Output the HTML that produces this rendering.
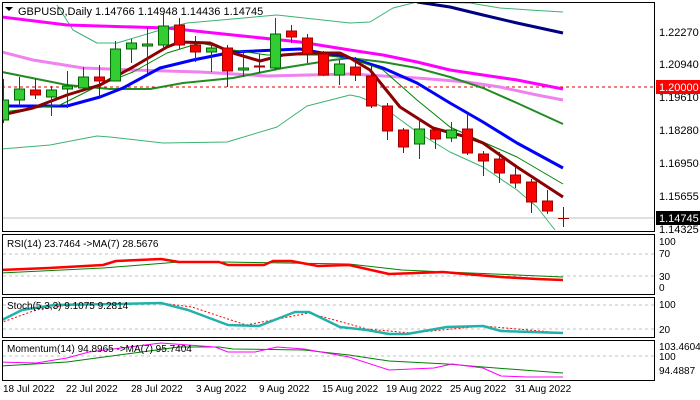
<!DOCTYPE html>
<html><head><meta charset="utf-8"><style>
html,body{margin:0;padding:0;background:#fff;width:700px;height:400px;overflow:hidden}
svg{display:block;font-family:"Liberation Sans",sans-serif}
</style></head><body>
<svg width="700" height="400" viewBox="0 0 700 400" xmlns="http://www.w3.org/2000/svg">
<rect width="700" height="400" fill="#fff"/>
<defs><clipPath id="m"><rect x="3" y="3" width="652" height="228"/></clipPath>
<clipPath id="s"><rect x="3" y="234" width="652" height="148"/></clipPath></defs>
<g clip-path="url(#m)" fill="none" stroke-linejoin="round">
<line x1="2" y1="218" x2="655" y2="218" stroke="#c0c0c0"/>
<line x1="2" y1="87" x2="655" y2="87" stroke="#e00000" stroke-dasharray="3,3"/>
<polyline stroke="#3cb371" points="57,5 73,30 97,43 117,43 167,28 187,23 277,15 350,23 370,22 393,8 417,2 470,3 500,8 530,10 563,12"/>
<polyline stroke="#3cb371" points="2,149 50,145 97,136 110,137 163,143 227,142 277,127 307,106 350,95 360,97 383,107 417,132 450,152 483,167 517,190 537,207 555,230"/>
<polyline stroke="#ff00ff" stroke-width="3" points="2,17 67,25 167,28 233,35 300,42 350,50 383,55 417,62 450,70 483,75 517,80 563,89"/>
<polyline stroke="#ee82ee" stroke-width="3" points="2,52 33,60 83,68 133,70 200,72 267,76 350,74 417,78 467,82 500,87 537,95 563,100"/>
<polyline stroke="#000080" stroke-width="3" points="417,2 450,7 483,15 517,23 563,33"/>
<polyline stroke="#228b22" stroke-width="2" points="2,72 67,85 110,89 150,89 183,83 233,78 283,68 333,60 350,58 383,62 417,68 450,77 483,88 517,103 563,124"/>
<polyline stroke="#0000ff" stroke-width="3" points="7,106 67,106 100,97 123,88 160,68 193,60 233,52 300,49 333,55 350,58 383,68 417,83 450,103 483,122 517,143 563,168"/>
<polyline stroke="#008000" points="2,112 60,105 100,85 133,72 167,53 200,43 233,50 267,55 317,55 350,58 383,70 417,100 450,127 483,142 517,157 563,184"/>
<polyline stroke="#8b0000" stroke-width="3" points="2,115 33,108 67,95 100,85 133,67 167,47 180,42 210,43 233,53 260,61 283,55 310,53 340,53 350,58 370,70 400,107 433,128 467,137 483,143 517,167 563,197"/>
<g shape-rendering="crispEdges" stroke-width="1">
<g stroke="#006400" fill="#32cd32">
<line x1="3.5" y1="79" x2="3.5" y2="123"/><rect x="-1.5" y="100" width="10" height="20"/>
<line x1="19.5" y1="77" x2="19.5" y2="106"/><rect x="14.5" y="89" width="10" height="11"/>
<line x1="51.5" y1="86" x2="51.5" y2="116"/><rect x="46.5" y="90" width="10" height="7"/>
<line x1="67.5" y1="71" x2="67.5" y2="108"/><rect x="62.5" y="86" width="10" height="3"/>
<line x1="83.5" y1="67" x2="83.5" y2="89"/><rect x="78.5" y="77" width="10" height="11"/>
<line x1="115.5" y1="41" x2="115.5" y2="81"/><rect x="110.5" y="49" width="10" height="32"/>
<line x1="131.5" y1="39" x2="131.5" y2="63"/><rect x="126.5" y="43" width="10" height="6"/>
<line x1="147.5" y1="27" x2="147.5" y2="73"/><rect x="142.5" y="44" width="10" height="2"/>
<line x1="163.5" y1="13" x2="163.5" y2="49"/><rect x="158.5" y="26" width="10" height="19"/>
<line x1="211.5" y1="43" x2="211.5" y2="72"/><rect x="206.5" y="48" width="10" height="4"/>
<line x1="243.5" y1="53" x2="243.5" y2="77"/><rect x="238.5" y="68" width="10" height="2"/>
<line x1="275.5" y1="18" x2="275.5" y2="70"/><rect x="270.5" y="34" width="10" height="34"/>
<line x1="339.5" y1="60" x2="339.5" y2="85"/><rect x="334.5" y="64" width="10" height="11"/>
<line x1="419.5" y1="118" x2="419.5" y2="159"/><rect x="414.5" y="129" width="10" height="15"/>
<line x1="451.5" y1="122" x2="451.5" y2="142"/><rect x="446.5" y="130" width="10" height="8"/>
</g>
<g stroke="#a00000" fill="#ff0000">
<line x1="35.5" y1="79" x2="35.5" y2="99"/><rect x="30.5" y="90" width="10" height="5"/>
<line x1="99.5" y1="65" x2="99.5" y2="97"/><rect x="94.5" y="77" width="10" height="4"/>
<line x1="179.5" y1="18" x2="179.5" y2="49"/><rect x="174.5" y="25" width="10" height="20"/>
<line x1="195.5" y1="36" x2="195.5" y2="62"/><rect x="190.5" y="45" width="10" height="7"/>
<line x1="227.5" y1="45" x2="227.5" y2="87"/><rect x="222.5" y="48" width="10" height="23"/>
<line x1="259.5" y1="54" x2="259.5" y2="73"/><rect x="254.5" y="66" width="10" height="1"/>
<line x1="291.5" y1="25" x2="291.5" y2="43"/><rect x="286.5" y="31" width="10" height="6"/>
<line x1="307.5" y1="34" x2="307.5" y2="63"/><rect x="302.5" y="38" width="10" height="16"/>
<line x1="323.5" y1="51" x2="323.5" y2="76"/><rect x="318.5" y="54" width="10" height="21"/>
<line x1="355.5" y1="57" x2="355.5" y2="81"/><rect x="350.5" y="67" width="10" height="8"/>
<line x1="371.5" y1="65" x2="371.5" y2="108"/><rect x="366.5" y="76" width="10" height="30"/>
<line x1="387.5" y1="103" x2="387.5" y2="140"/><rect x="382.5" y="106" width="10" height="25"/>
<line x1="403.5" y1="128" x2="403.5" y2="153"/><rect x="398.5" y="130" width="10" height="17"/>
<line x1="435.5" y1="128" x2="435.5" y2="149"/><rect x="430.5" y="130" width="10" height="9"/>
<line x1="467.5" y1="113" x2="467.5" y2="155"/><rect x="462.5" y="129" width="10" height="24"/>
<line x1="483.5" y1="151" x2="483.5" y2="176"/><rect x="478.5" y="154" width="10" height="7"/>
<line x1="499.5" y1="152" x2="499.5" y2="183"/><rect x="494.5" y="159" width="10" height="14"/>
<line x1="515.5" y1="164" x2="515.5" y2="188"/><rect x="510.5" y="175" width="10" height="8"/>
<line x1="531.5" y1="179" x2="531.5" y2="213"/><rect x="526.5" y="182" width="10" height="20"/>
<line x1="547.5" y1="190" x2="547.5" y2="214"/><rect x="542.5" y="201" width="10" height="10"/>
<line x1="563.5" y1="207" x2="563.5" y2="227"/><line x1="558" y1="218.5" x2="569" y2="218.5"/>
</g></g>
</g>
<g clip-path="url(#s)" fill="none" stroke-linejoin="round">
<line x1="3" y1="254" x2="655" y2="254" stroke="#c0c0c0" stroke-dasharray="3,3"/>
<line x1="3" y1="276" x2="655" y2="276" stroke="#c0c0c0" stroke-dasharray="3,3"/>
<polyline stroke="#008000" points="0,273 103,268 179,262 224,262 349,264 402,270 447,272 563,277"/>
<polyline stroke="#ff0000" stroke-width="2.5" points="0,270 49,268 103,265 116,261 161,259 179,262 219,262 228,265 264,265 273,261 291,261 318,266 349,265 389,274 416,273 443,272 465,274 501,277 537,279 563,280"/>
<line x1="3" y1="305" x2="655" y2="305" stroke="#c0c0c0" stroke-dasharray="3,3"/>
<line x1="3" y1="329" x2="655" y2="329" stroke="#c0c0c0" stroke-dasharray="3,3"/>
<polyline stroke="#ff0000" stroke-dasharray="2,2" points="0,323 36,310 67,305 161,303 192,307 246,325 309,313 367,329 411,333 483,326 563,333"/>
<polyline stroke="#20b2aa" stroke-width="2.5" points="0,321 22,310 54,305 116,304 161,303 188,310 228,325 259,326 295,312 309,312 340,327 367,330 389,334 407,334 447,327 483,326 501,331 563,333"/>
<line x1="3" y1="356" x2="655" y2="356" stroke="#c0c0c0" stroke-dasharray="3,3"/>
<polyline stroke="#008000" points="0,366 67,362 134,353 179,347 219,347 233,349 304,350 349,355 389,361 447,364 483,367 563,373"/>
<polyline stroke="#ff00ff" points="0,362 36,363 67,358 89,352 161,343 188,345 215,347 228,352 255,352 277,347 304,349 349,357 389,370 434,368 452,364 483,368 501,376 528,377 563,377"/>
</g>
<g fill="none" stroke="#000" shape-rendering="crispEdges">
<rect x="2.5" y="2.5" width="652" height="229"/>
<rect x="2.5" y="234.5" width="652" height="60"/>
<rect x="2.5" y="297.5" width="652" height="40"/>
<rect x="2.5" y="340.5" width="652" height="40"/>
</g>
<g font-size="11" fill="#000">
<polygon points="5,7 13,7 9,11" fill="#000"/>
<text x="18" y="15">GBPUSD,Daily  1.14766 1.14948 1.14436 1.14745</text>
<text x="659" y="36">1.22270</text>
<text x="659" y="68">1.20940</text>
<text x="659" y="101">1.19610</text>
<text x="659" y="134">1.18280</text>
<text x="659" y="167">1.16950</text>
<text x="659" y="200">1.15655</text>
<text x="659" y="233">1.14325</text>
<rect x="656" y="80" width="44" height="14" fill="#ff0000"/>
<text x="659" y="91" fill="#fff">1.20000</text>
<rect x="656" y="211" width="44" height="14" fill="#000"/>
<text x="659" y="222" fill="#fff">1.14745</text>
<text x="7" y="247" font-size="10">RSI(14) 23.7464  -&gt;MA(7) 28.5676</text>
<text x="659" y="245" font-size="10">100</text>
<text x="659" y="257" font-size="10">70</text>
<text x="659" y="280" font-size="10">30</text>
<text x="659" y="291" font-size="10">0</text>
<text x="7" y="309" font-size="10">Stoch(5,3,3) 9.1075 9.2814</text>
<text x="659" y="308" font-size="10">100</text>
<text x="659" y="333" font-size="10">20</text>
<text x="7" y="352" font-size="10">Momentum(14) 94.8965  -&gt;MA(7) 95.7404</text>
<text x="659" y="350" font-size="10">103.4604</text>
<text x="659" y="360" font-size="10">100</text>
<text x="659" y="374" font-size="10">94.4887</text>
<g font-size="10">
<text x="3" y="392">18 Jul 2022</text>
<text x="66" y="392">22 Jul 2022</text>
<text x="131" y="392">28 Jul 2022</text>
<text x="196" y="392">3 Aug 2022</text>
<text x="259" y="392">9 Aug 2022</text>
<text x="322" y="392">15 Aug 2022</text>
<text x="386" y="392">19 Aug 2022</text>
<text x="450" y="392">25 Aug 2022</text>
<text x="515" y="392">31 Aug 2022</text>
</g>
</g>
</svg>
</body></html>
